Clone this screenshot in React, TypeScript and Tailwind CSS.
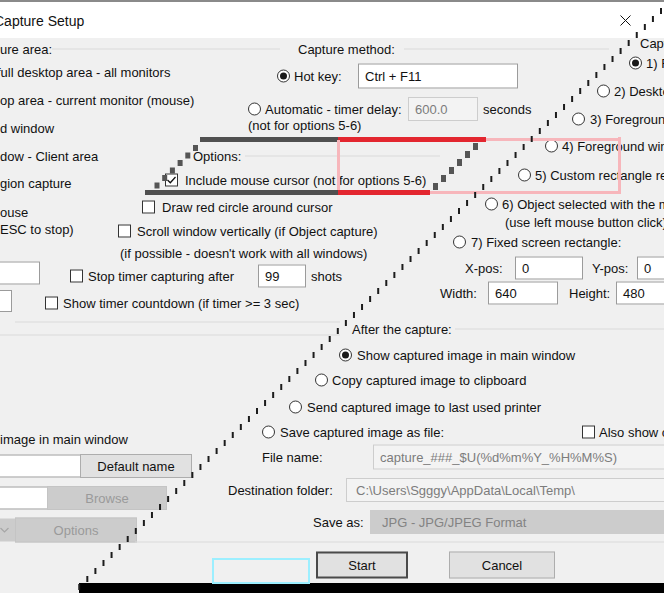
import type { ReactNode } from 'react'

// ── small controls ────────────────────────────────────────────────────────────

function Radio({ on }: { on?: boolean }) {
  return (
    <span className="flex h-[13px] w-[13px] shrink-0 items-center justify-center rounded-full border border-[#333] bg-white">
      {on && <span className="h-[7px] w-[7px] rounded-full bg-[#1a1a1a]" />}
    </span>
  )
}

function Check({ on }: { on?: boolean }) {
  return (
    <span className="flex h-[13px] w-[13px] shrink-0 items-center justify-center border border-[#333] bg-white">
      {on && (
        <svg width="11" height="11" viewBox="0 0 11 11">
          <path d="M1.5 5.5l2.8 2.8L9.5 2.5" fill="none" stroke="#111" strokeWidth="1.3" />
        </svg>
      )}
    </span>
  )
}

// a zero-height line in the body; items are centred on it
function Row({ gap, children }: { gap: string; children: ReactNode }) {
  return <div className={`grid h-0 shrink-0 grid-rows-[0px] ${gap}`}>{children}</div>
}

function At({ x, children }: { x: string; children: ReactNode }) {
  return (
    <div className={`col-start-1 row-start-1 flex -translate-y-1/2 items-center self-start justify-self-start whitespace-nowrap ${x}`}>
      {children}
    </div>
  )
}

const field = 'flex items-center border border-[#9b9b9b] bg-white px-[6px]'
const fieldOff = 'flex items-center border border-[#cdcdcd] bg-[#f3f3f3] px-[6px] text-[#7c7c7c]'
const btn = 'flex items-center justify-center border border-[#adadad] bg-[#e1e1e1]'
const btnOff = 'flex items-center justify-center border border-[#c4c4c4] bg-[#cccccc] text-[#9a9a9a]'
const rule = 'h-px bg-[#d9d9d9]'

// ── overlay drawing (the torn diagonal and the selection frame) ──────────────

function Tear() {
  const ticks = []
  for (let y = 8; y < 590; y += 8) ticks.push({ x: 660 - 1.01 * (y - 8), y })
  const left = [0, 1, 2, 3, 4, 5].map(k => ({ x: 193 - 7.7 * k, y: 145 + 7.5 * k }))
  const right = [0, 1, 2, 3, 4, 5].map(k => ({ x: 473 - 8 * k, y: 143 + 8 * k }))
  return (
    <svg className="pointer-events-none absolute left-0 top-0" width="664" height="593" viewBox="0 0 664 593">
      {ticks.map((t, i) => (
        <rect key={i} x={t.x} y={t.y} width="2" height="6" fill="#1c1c1c" />
      ))}
      {left.map((b, i) => (
        <rect key={'l' + i} x={b.x} y={b.y} width="5" height="6" fill="#555" />
      ))}
      {right.map((b, i) => (
        <rect key={'r' + i} x={b.x} y={b.y} width="5" height="7" fill="#555" />
      ))}
    </svg>
  )
}

// ── page ──────────────────────────────────────────────────────────────────────

export default function App() {
  return (
    <div className="relative h-[593px] w-[664px] overflow-hidden bg-[#f0f0f0] font-['Liberation_Sans',Arial,sans-serif] text-[13px] leading-[15px] text-[#111]">
      {/* Title bar */}
      <div className="flex h-[38px] items-center border-t-2 border-[#8a8a8a] bg-white">
        <span className="ml-[-6px] mt-[2px] text-[14px]">Capture Setup</span>
        <svg className="ml-auto mr-[33px]" width="11" height="11" viewBox="0 0 11 11">
          <path d="M0.5 0.5l10 10M10.5 0.5l-10 10" stroke="#111" strokeWidth="1" />
        </svg>
      </div>

      {/* Body */}
      <div className="flex h-[555px] flex-col overflow-hidden">
        <Row gap="mt-[5px]">
          <At x="ml-[640px]">Capture area:</At>
        </Row>
        <Row gap="mt-[6px]">
          <At x="ml-[0px]">ure area:</At>
          <At x="ml-[52px]"><div className={`${rule} w-[228px]`} /></At>
          <At x="ml-[298px]">Capture method:</At>
          <At x="ml-[404px]"><div className={`${rule} w-[205px]`} /></At>
        </Row>
        <Row gap="mt-[14px]">
          <At x="ml-[629px]"><Radio on /><span className="ml-[4px]">1) Full desktop area - all monitors</span></At>
        </Row>
        <Row gap="mt-[9px]">
          <At x="ml-[-3px]">full desktop area - all monitors</At>
        </Row>
        <Row gap="mt-[4px]">
          <At x="ml-[277px]"><Radio on /><span className="ml-[4px]">Hot key:</span></At>
          <At x="ml-[358px]"><div className={`${field} h-[25px] w-[160px]`}>Ctrl + F11</div></At>
        </Row>
        <Row gap="mt-[15px]">
          <At x="ml-[597px]"><Radio /><span className="ml-[4px]">2) Desktop area - current monitor (mouse)</span></At>
        </Row>
        <Row gap="mt-[9px]">
          <At x="ml-[0px]">op area - current monitor (mouse)</At>
        </Row>
        <Row gap="mt-[9px]">
          <At x="ml-[248px]"><Radio /><span className="ml-[4px]">Automatic - timer delay:</span></At>
          <At x="ml-[408px]"><div className={`${fieldOff} h-[24px] w-[70px]`}>600.0</div></At>
          <At x="ml-[483px]">seconds</At>
        </Row>
        <Row gap="mt-[10px]">
          <At x="ml-[572px]"><Radio /><span className="ml-[5px]">3) Foreground window</span></At>
        </Row>
        <Row gap="mt-[6px]">
          <At x="ml-[248px]">(not for options 5-6)</At>
        </Row>
        <Row gap="mt-[3px]">
          <At x="ml-[0px]">d window</At>
        </Row>
        <Row gap="mt-[18px]">
          <At x="ml-[545px]"><Radio /><span className="ml-[4px]">4) Foreground window - Client area</span></At>
        </Row>
        <Row gap="mt-[10px]">
          <At x="ml-[0px]">dow - Client area</At>
          <At x="ml-[193px]">Options:</At>
          <At x="ml-[245px]"><div className={`${rule} w-[195px]`} /></At>
        </Row>
        <Row gap="mt-[19px]">
          <At x="ml-[518px]"><Radio /><span className="ml-[4px]">5) Custom rectangle region capture</span></At>
        </Row>
        <Row gap="mt-[5px]">
          <At x="ml-[165px]"><Check on /><span className="ml-[7px]">Include mouse cursor (not for options 5-6)</span></At>
        </Row>
        <Row gap="mt-[3px]">
          <At x="ml-[0px]">gion capture</At>
        </Row>
        <Row gap="mt-[21px]">
          <At x="ml-[485px]"><Radio /><span className="ml-[4px]">6) Object selected with the mouse (ESC to stop)</span></At>
        </Row>
        <Row gap="mt-[3px]">
          <At x="ml-[142px]"><Check /><span className="ml-[7px]">Draw red circle around cursor</span></At>
        </Row>
        <Row gap="mt-[5px]">
          <At x="ml-[0px]">ouse</At>
        </Row>
        <Row gap="mt-[10px]">
          <At x="ml-[505px]">(use left mouse button click)</At>
        </Row>
        <Row gap="mt-[7px]">
          <At x="ml-[0px]">ESC to stop)</At>
        </Row>
        <Row gap="mt-[2px]">
          <At x="ml-[118px]"><Check /><span className="ml-[6px]">Scroll window vertically (if Object capture)</span></At>
        </Row>
        <Row gap="mt-[11px]">
          <At x="ml-[453px]"><Radio /><span className="ml-[5px]">7) Fixed screen rectangle:</span></At>
        </Row>
        <Row gap="mt-[11px]">
          <At x="ml-[120px]">(if possible - doesn't work with all windows)</At>
        </Row>
        <Row gap="mt-[15px]">
          <At x="ml-[465px]">X-pos:</At>
          <At x="ml-[515px]"><div className={`${field} h-[23px] w-[68px]`}>0</div></At>
          <At x="ml-[592px]">Y-pos:</At>
          <At x="ml-[637px]"><div className={`${field} h-[23px] w-[60px]`}>0</div></At>
        </Row>
        <Row gap="mt-[5px]">
          <At x="ml-[-2px]"><div className={`${field} h-[23px] w-[42px]`} /></At>
        </Row>
        <Row gap="mt-[3px]">
          <At x="ml-[70px]"><Check /><span className="ml-[5px]">Stop timer capturing after</span></At>
          <At x="ml-[258px]"><div className={`${field} h-[23px] w-[48px]`}>99</div></At>
          <At x="ml-[311px]">shots</At>
        </Row>
        <Row gap="mt-[17px]">
          <At x="ml-[440px]">Width:</At>
          <At x="ml-[488px]"><div className={`${field} h-[23px] w-[70px]`}>640</div></At>
          <At x="ml-[569px]">Height:</At>
          <At x="ml-[616px]"><div className={`${field} h-[23px] w-[60px]`}>480</div></At>
        </Row>
        <Row gap="mt-[8px]">
          <At x="ml-[-2px]"><div className={`${field} h-[22px] w-[12px]`} /></At>
        </Row>
        <Row gap="mt-[2px]">
          <At x="ml-[45px]"><Check /><span className="ml-[5px]">Show timer countdown (if timer &gt;= 3 sec)</span></At>
        </Row>
        <Row gap="mt-[19px]">
          <At x="ml-[15px]"><div className={`${rule} w-[325px]`} /></At>
        </Row>
        <Row gap="mt-[7px]">
          <At x="ml-[352px]">After the capture:</At>
          <At x="ml-[455px]"><div className={`${rule} w-[209px]`} /></At>
        </Row>
        <Row gap="mt-[6px]">
          <At x="ml-[0px]"><div className={`${rule} w-[340px]`} /></At>
        </Row>
        <Row gap="mt-[20px]">
          <At x="ml-[339px]"><Radio on /><span className="ml-[5px]">Show captured image in main window</span></At>
        </Row>
        <Row gap="mt-[25px]">
          <At x="ml-[315px]"><Radio /><span className="ml-[4px]">Copy captured image to clipboard</span></At>
        </Row>
        <Row gap="mt-[27px]">
          <At x="ml-[289px]"><Radio /><span className="ml-[5px]">Send captured image to last used printer</span></At>
        </Row>
        <Row gap="mt-[25px]">
          <At x="ml-[262px]"><Radio /><span className="ml-[5px]">Save captured image as file:</span></At>
          <At x="ml-[582px]"><Check /><span className="ml-[4px]">Also show captured image in main window</span></At>
        </Row>
        <Row gap="mt-[7px]">
          <At x="ml-[0px]">image in main window</At>
        </Row>
        <Row gap="mt-[18px]">
          <At x="ml-[262px]">File name:</At>
          <At x="ml-[373px]"><div className={`${fieldOff} h-[25px] w-[300px]`}>capture_###_$U(%d%m%Y_%H%M%S)</div></At>
        </Row>
        <Row gap="mt-[9px]">
          <At x="ml-[-2px]"><div className={`${field} h-[23px] w-[84px]`} /></At>
          <At x="ml-[80px]"><div className={`${btn} h-[24px] w-[112px]`}>Default name</div></At>
        </Row>
        <Row gap="mt-[24px]">
          <At x="ml-[228px]">Destination folder:</At>
          <At x="ml-[346px]"><div className={`${fieldOff} h-[24px] w-[330px] pl-[9px]`}>C:\Users\Sgggy\AppData\Local\Temp\</div></At>
        </Row>
        <Row gap="mt-[8px]">
          <At x="ml-[-2px]"><div className={`${field} h-[23px] w-[52px]`} /></At>
          <At x="ml-[47px]"><div className={`${btnOff} h-[24px] w-[120px]`}>Browse</div></At>
        </Row>
        <Row gap="mt-[24px]">
          <At x="ml-[313px]">Save as:</At>
          <At x="ml-[370px]">
            <div className="flex h-[24px] w-[300px] items-center bg-[#cccccc] pl-[12px] text-[#838383]">JPG - JPG/JPEG Format</div>
          </At>
        </Row>
        <Row gap="mt-[8px]">
          <At x="ml-[15px]"><div className={`${btnOff} h-[25px] w-[122px]`}>Options</div></At>
          <At x="ml-[-2px]">
            <div className="flex h-[23px] w-[17px] items-center bg-[#cccccc] pl-[2px]">
              <svg width="9" height="6" viewBox="0 0 9 6">
                <path d="M0.5 0.5l4 4 4-4" fill="none" stroke="#a6a6a6" strokeWidth="1.2" />
              </svg>
            </div>
          </At>
        </Row>
        <Row gap="mt-[12px]">
          <At x="ml-[135px]"><div className={`${rule} w-[529px]`} /></At>
        </Row>
        <Row gap="mt-[23px]">
          <At x="ml-[316px]">
            <div className="flex h-[27px] w-[92px] items-center justify-center border-2 border-[#4a4a4a] bg-[#e1e1e1]">Start</div>
          </At>
          <At x="ml-[449px]"><div className={`${btn} h-[27px] w-[106px]`}>Cancel</div></At>
        </Row>
        <Row gap="mt-[6px]">
          <At x="ml-[212px]"><div className="h-[26px] w-[98px] border-2 border-[#9cefff]" /></At>
        </Row>
        <div className="ml-[79px] mt-[12px] h-[10px] shrink-0 bg-black" />
      </div>

      {/* selection frame laid over the options group */}
      <div className="pointer-events-none absolute left-[200px] top-[137px] h-[5px] w-[138px] bg-[#505050]" />
      <div className="pointer-events-none absolute left-[338px] top-[137px] h-[5px] w-[148px] bg-[#e3262f]" />
      <div className="pointer-events-none absolute left-[486px] top-[138px] h-[3px] w-[135px] bg-[#f7b6bb]" />
      <div className="pointer-events-none absolute left-[618px] top-[137px] h-[57px] w-[3px] bg-[#f7b6bb]" />
      <div className="pointer-events-none absolute left-[337px] top-[140px] h-[52px] w-[3px] bg-[#f7b6bb]" />
      <div className="pointer-events-none absolute left-[145px] top-[190px] h-[5px] w-[193px] bg-[#505050]" />
      <div className="pointer-events-none absolute left-[338px] top-[190px] h-[5px] w-[92px] bg-[#e3262f]" />
      <div className="pointer-events-none absolute left-[430px] top-[191px] h-[3px] w-[191px] bg-[#f7b6bb]" />

      <Tear />
    </div>
  )
}
